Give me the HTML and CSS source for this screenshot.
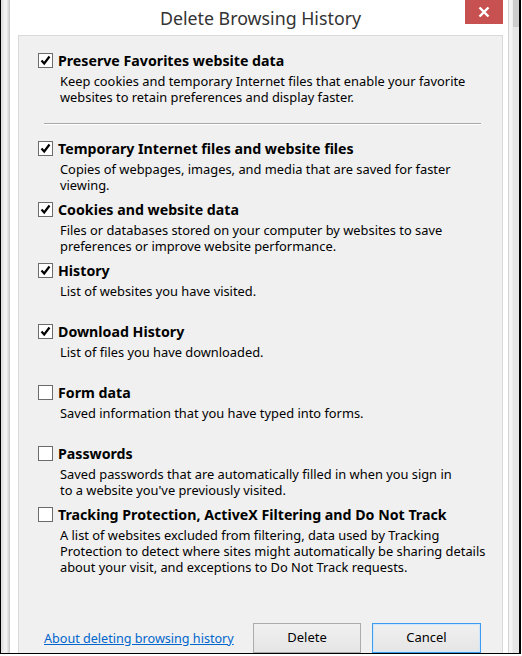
FILE: index.html
```html
<!DOCTYPE html>
<html>
<head>
  <meta charset='utf-8'>
  <title>Delete Browsing History</title>
  <link rel="stylesheet" href="styles.css">
</head>
<body>
  <div class='shot'>
    <div class='behind'></div>
    <div class='dialog'>
      <div class='titlebar'>
        <span class='title'>Delete Browsing History</span>
        <span class='close'>
          <svg width='12' height='10' viewBox='0 0 12 10'><path d='M1.5 0.5 L10.5 9.5 M10.5 0.5 L1.5 9.5' stroke='#fff' stroke-width='2.4'/></svg>
        </span>
      </div>
      <div class='panel'>
        <div class='item first'>
          <div class='head'><span class='box checked'></span>Preserve Favorites website data</div>
          <div class='desc'>Keep cookies and temporary Internet files that enable your favorite<br>websites to retain preferences and display faster.</div>
        </div>
        <div class='sep'></div>
        <div class='item'>
          <div class='head'><span class='box checked'></span>Temporary Internet files and website files</div>
          <div class='desc'>Copies of webpages, images, and media that are saved for faster<br>viewing.</div>
        </div>
        <div class='item'>
          <div class='head'><span class='box checked'></span>Cookies and website data</div>
          <div class='desc'>Files or databases stored on your computer by websites to save<br>preferences or improve website performance.</div>
        </div>
        <div class='item'>
          <div class='head'><span class='box checked'></span>History</div>
          <div class='desc'>List of websites you have visited.</div>
        </div>
        <div class='item'>
          <div class='head'><span class='box checked'></span>Download History</div>
          <div class='desc'>List of files you have downloaded.</div>
        </div>
        <div class='item'>
          <div class='head'><span class='box'></span>Form data</div>
          <div class='desc'>Saved information that you have typed into forms.</div>
        </div>
        <div class='item'>
          <div class='head'><span class='box'></span>Passwords</div>
          <div class='desc'>Saved passwords that are automatically filled in when you sign in<br>to a website you've previously visited.</div>
        </div>
        <div class='item'>
          <div class='head'><span class='box'></span>Tracking Protection, ActiveX Filtering and Do Not Track</div>
          <div class='desc'>A list of websites excluded from filtering, data used by Tracking<br>Protection to detect where sites might automatically be sharing details<br>about your visit, and exceptions to Do Not Track requests.</div>
        </div>
        <div class='footer'>
          <a href='#' class='about'>About deleting browsing history</a>
          <button class='btn'>Delete</button>
          <button class='btn default'>Cancel</button>
        </div>
      </div>
    </div>
    <div class='side'><div class='thumb'></div></div>
  </div>
</body>
</html>
```

FILE: styles.css
```css
*{box-sizing: border-box;}

body {
  margin: 0;
  background-color: #fff;
  font-family: "Noto Sans", "Open Sans", sans-serif;
  color: #000;
}

.shot {
  width: 521px;
  height: 654px;
  border: 1px solid #000;
  border-top: none;
  border-right-width: 2px;
  display: flex;
  overflow: hidden;
}

.behind {
  width: 8px;
  background: linear-gradient(to right, #e2e2e2 0, #e2e2e2 2px, #f2f2f2 3px, #f2f2f2 6px, #d8d8d8 7px);
}

.dialog {
  width: 500px;
  background-color: #fff;
  border-left: 1px solid #c9c9c9;
  border-right: 1px solid #d4d4d4;
  padding: 0 5px 0 8px;
}

.side {
  flex: 1;
  background: linear-gradient(to right, #f4f4f4 0, #f4f4f4 3px, #e6e6e6 4px);
}
.thumb {
  margin-left: 4px;
  height: 27px;
  background-color: #cdcdcd;
}

.titlebar {
  height: 35px;
  display: flex;
  justify-content: center;
  position: relative;
}
.title {
  font-size: 17.8px;
  color: #333;
  line-height: 36px;
}
.close {
  position: absolute;
  right: 0;
  top: 0;
  width: 38px;
  height: 24px;
  background-color: #c75050;
  display: flex;
  align-items: center;
  justify-content: center;
}

.panel {
  height: 640px;
  background-color: #f0f0f0;
  border: 1px solid #d9d9d9;
  padding: 14px 21px 0 19px;
}

.item {
  height: 61px;
}
.item.first {
  height: 73px;
}
.head {
  display: flex;
  align-items: center;
  height: 20px;
  font-size: 14.2px;
  font-weight: bold;
  white-space: nowrap;
}
.box {
  width: 15px;
  height: 15px;
  border: 1px solid #6b6b6b;
  background-color: #fff;
  margin-right: 5px;
  flex: none;
}
.box.checked {
  background: #fff url("data:image/svg+xml,%3Csvg xmlns='http://www.w3.org/2000/svg' width='13' height='13'%3E%3Cpath d='M2.5 6.5 L5.2 9.5 L10.5 2.5' fill='none' stroke='%23000' stroke-width='2.2'/%3E%3C/svg%3E") no-repeat center;
}
.desc {
  margin-top: 3px;
  padding-left: 22px;
  font-size: 12.85px;
  line-height: 16px;
  white-space: nowrap;
}

.sep {
  margin: 0 0 13px 6px;
  height: 2px;
  background-color: #a8a8a8;
  border-bottom: 1px solid #fff;
}

.footer {
  display: flex;
  align-items: flex-start;
  margin-top: 58px;
  padding-left: 6px;
}
.about {
  flex: 1;
  color: #0066cc;
  font-size: 12.6px;
  line-height: 16px;
  margin-top: 8px;
}
.btn {
  width: 108px;
  height: 30px;
  margin-left: 11px;
  font: 13px "Noto Sans", sans-serif;
  background: linear-gradient(#f0f0f0, #e5e5e5);
  border: 1px solid #acacac;
  padding: 0 0 2px;
}
.btn.default {
  width: 109px;
  border-color: #3c9cf0;
  box-shadow: inset 0 0 0 1px #cfe6fb;
}
```
